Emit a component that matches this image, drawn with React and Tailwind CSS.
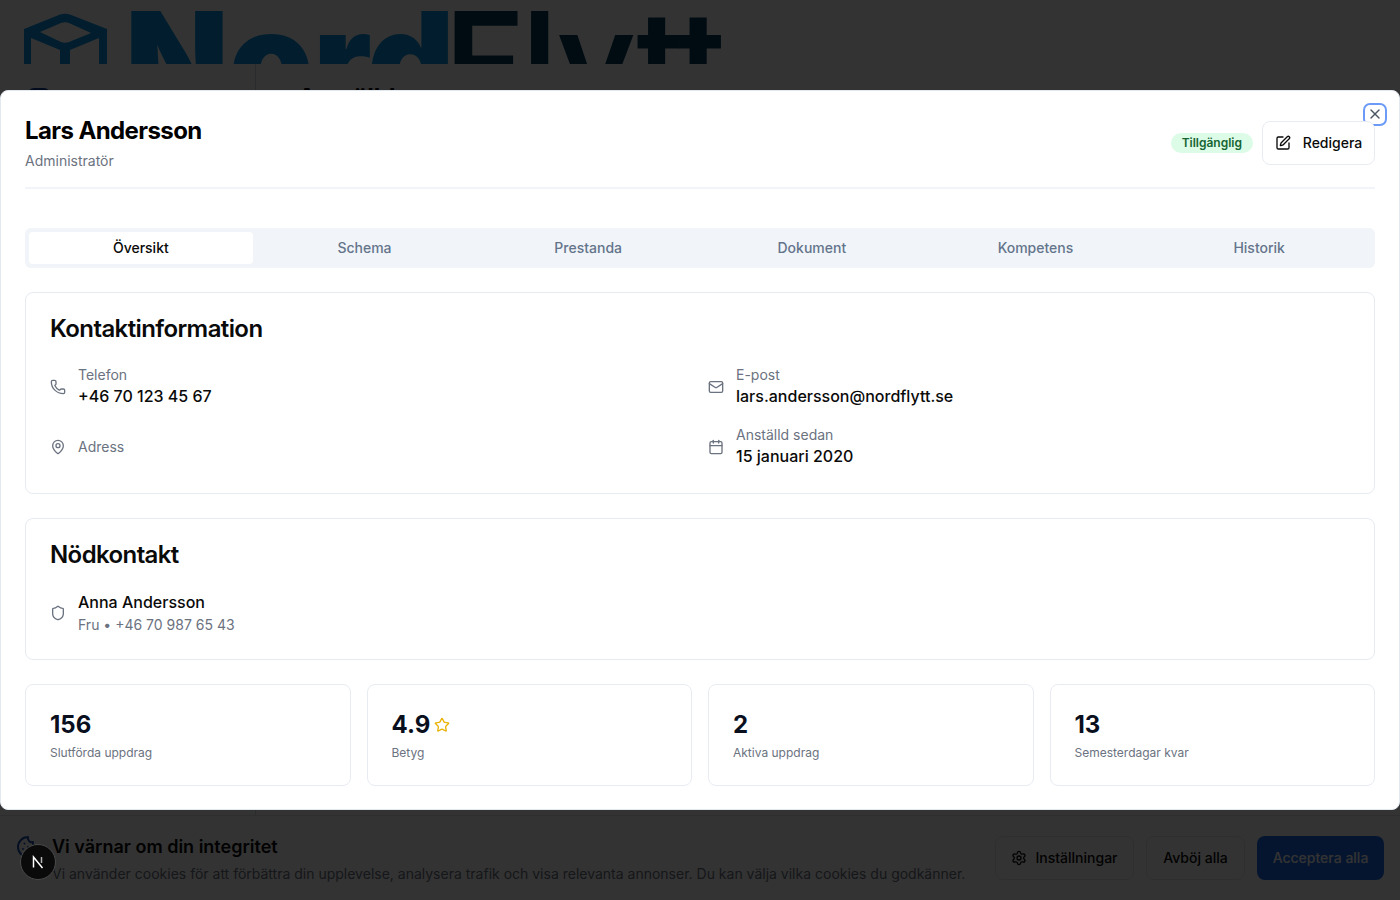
import React from "react";
import { X, SquarePen, Phone, Mail, MapPin, Calendar, Shield, Star, Settings, Cookie } from "lucide-react";

const font = { fontFamily: "Inter, 'Liberation Sans', sans-serif" };

function InfoRow({ icon: Icon, label, value }) {
  return (
    <div className="flex items-center gap-3 h-11">
      <Icon className="w-4 h-4 text-[#6b7280] shrink-0" strokeWidth={2} />
      <div className={value ? "h-11" : ""}>
        <p className="text-sm leading-5 text-[#6b7280]">{label}</p>
        {value && <p className="-mt-px text-base leading-6 font-medium text-[#0a0a0a]">{value}</p>}
      </div>
    </div>
  );
}

function Stat({ value, label, star }) {
  return (
    <div className="rounded-lg border border-[#e8ecf2] p-6 bg-white">
      <div className="flex items-center gap-1 h-8">
        <span className="text-2xl leading-8 font-bold text-[#0a0f1e]">{value}</span>
        {star && <Star className="w-4 h-4 text-[#eab308]" strokeWidth={2} />}
      </div>
      <p className="mt-[4px] text-xs leading-4 text-[#6b7280]">{label}</p>
    </div>
  );
}

export default function App() {
  const tabs = ["Översikt", "Schema", "Prestanda", "Dokument", "Kompetens", "Historik"];
  return (
    <div style={font} className="relative w-[1400px] h-[900px] overflow-hidden bg-white">
      {/* page behind the dialog */}
      <div className="h-full flex flex-col">
        <header className="h-16 overflow-hidden flex items-start pl-6 gap-[17px] shrink-0">
          <svg width="84" height="64" viewBox="24 0 84 64" className="shrink-0" fill="#0a98e6" fillRule="evenodd">
            <path d="M24 29L60 14.500Q65 13 70 14.500L107 29V64H99V38L70 50V64H60V50L31 38V64H24Z M40 32L61 23Q65 21.500 69 23L91 33L69 42Q65 43.500 61 42Z" />
          </svg>
          <div className="text-[135px] leading-[130px] whitespace-nowrap -mt-[5px] flex">
            <span className="text-[#0a98e6] font-black">Nord</span>
            <span className="text-[#003a5a] font-semibold tracking-[-2px] -ml-[10px]">Flytt</span>
          </div>
        </header>
        <div className="flex flex-1">
          <aside className="w-[256px] border-r border-[#d1d5db] pl-[28px] pt-[24px]">
            <div className="w-[22px] h-[24px] rounded-md bg-[#0a3d8f]" />
          </aside>
          <main className="pl-[42px] pt-[18px] text-2xl font-bold text-black">Anställda</main>
        </div>
        <div className="flex items-center justify-between pl-[16px] pr-4 h-[85px] pt-[1px] border-t border-[#e5e7eb]">
          <div className="flex gap-3">
            <Cookie className="w-6 h-6 text-[#1e4fb0] mt-[2px]" strokeWidth={2} />
            <div>
              <p className="text-lg leading-7 font-semibold text-[#0a0a0a]">Vi värnar om din integritet</p>
              <p className="text-sm leading-5 mt-[3px] text-[#6b7280]">Vi använder cookies för att förbättra din upplevelse, analysera trafik och visa relevanta annonser. Du kan välja vilka cookies du godkänner.</p>
            </div>
          </div>
          <div className="flex gap-3 mb-[2px] text-sm font-medium text-[#0a0a0a]">
            <button className="h-11 w-[139px] flex items-center justify-center gap-2 rounded-lg border border-[#e5e7eb]"><Settings className="w-4 h-4" />Inställningar</button>
            <button className="h-11 w-[99px] rounded-lg border border-[#e5e7eb]">Avböj alla</button>
            <button className="h-11 w-[127px] rounded-lg bg-[#1d6cea] text-white">Acceptera alla</button>
          </div>
        </div>
      </div>

      <div className="absolute inset-0 bg-black/80" />

      {/* dev badge */}
      <div className="absolute left-[20px] top-[844px] w-9 h-9 rounded-full bg-[#0a0a0a] border border-[#4a4a4a] flex items-center justify-center">
        <svg width="14" height="14" viewBox="0 0 14 14" fill="none" stroke="white" strokeWidth="1.500">
          <path d="M2.500 12.500V2L11.500 13" />
          <path d="M10.500 2V8" strokeOpacity="0.7" />
        </svg>
      </div>

      {/* dialog */}
      <div className="absolute left-0 top-[90px] w-[1400px] h-[720px] rounded-lg bg-white border border-[#e2e8f0] p-6">
        <button className="absolute right-[14px] top-[14px] w-5 h-[19px] pb-[2px] rounded-[5px] ring-2 ring-[#6b9bf7] flex items-center justify-center text-[#4b5563]">
          <X className="w-4 h-4" />
        </button>
        <div className="relative flex items-start justify-between pb-4 border-b-2 border-[#f1f5f9]">
          <div>
            <h2 className="text-2xl leading-8 font-bold tracking-tight text-black">Lars Andersson</h2>
            <p className="mt-1 text-sm leading-5 text-[#6b7280]">Administratör</p>
          </div>
          <div className="flex items-center gap-[9px] mt-[6px]">
            <span className="rounded-full bg-[#dcfce7] px-[11px] py-[2px] text-xs leading-4 font-semibold text-[#166534]">Tillgänglig</span>
            <button className="h-11 w-[113px] flex items-center justify-center gap-3 rounded-lg border border-[#e8ecf2] bg-white text-sm font-medium text-[#0a0a0a]">
              <SquarePen className="w-4 h-4" />Redigera
            </button>
          </div>
        </div>

        <div className="mt-[39px] h-10 p-1 rounded-md bg-[#f1f5f9] grid grid-cols-6">
          {tabs.map((t, i) => (
            <div key={t} className={`flex items-center justify-center rounded-sm text-sm font-medium ${i === 0 ? "bg-white text-[#0a0a0a]" : "text-[#64748b]"}`}>{t}</div>
          ))}
        </div>

        <section className="mt-6 rounded-lg border border-[#e6ebf2] p-6">
          <h3 className="text-2xl leading-6 font-semibold tracking-tight text-[#0a0a0a]">Kontaktinformation</h3>
          <div className="mt-6 grid grid-cols-2 gap-x-4 gap-y-4">
            <InfoRow icon={Phone} label="Telefon" value="+46 70 123 45 67" />
            <InfoRow icon={Mail} label="E-post" value="lars.andersson@nordflytt.se" />
            <InfoRow icon={MapPin} label="Adress" />
            <InfoRow icon={Calendar} label="Anställd sedan" value="15 januari 2020" />
          </div>
        </section>

        <section className="mt-6 rounded-lg border border-[#e6ebf2] p-6">
          <h3 className="text-2xl leading-6 font-semibold tracking-tight text-[#0a0a0a]">Nödkontakt</h3>
          <div className="mt-6 flex items-center gap-3">
            <Shield className="w-4 h-4 text-[#6b7280]" />
            <div>
              <p className="text-base leading-[22px] font-medium text-[#0a0a0a]">Anna Andersson</p>
              <p className="mt-[2px] text-sm leading-5 text-[#6b7280]">Fru • +46 70 987 65 43</p>
            </div>
          </div>
        </section>

        <div className="mt-6 grid grid-cols-4 gap-4">
          <Stat value="156" label="Slutförda uppdrag" />
          <Stat value="4.9" label="Betyg" star />
          <Stat value="2" label="Aktiva uppdrag" />
          <Stat value="13" label="Semesterdagar kvar" />
        </div>
      </div>
    </div>
  );
}
